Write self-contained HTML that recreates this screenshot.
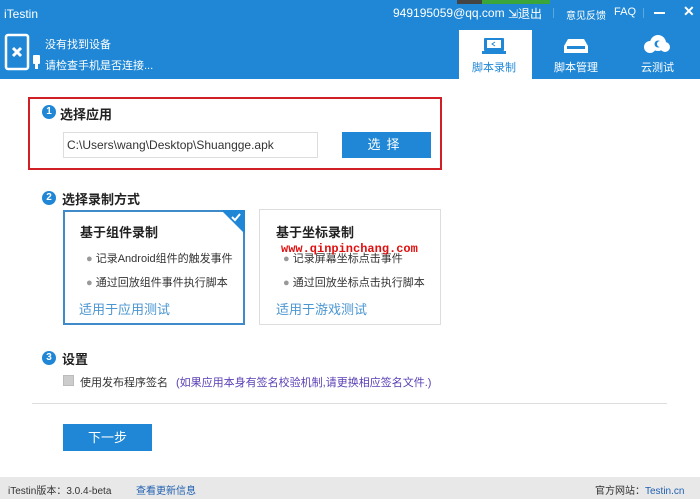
<!DOCTYPE html><html><head><meta charset="utf-8"><style>
*{margin:0;padding:0;box-sizing:border-box}
body{width:700px;height:499px;position:relative;background:#fff;font-family:"Liberation Sans","Noto Sans CJK SC",sans-serif;font-size:12px;color:#333;overflow:hidden}
.a{position:absolute;white-space:nowrap}
.hdr{left:0;top:0;width:700px;height:79px;background:#1f87d5}
.w{color:#fff}
.num{width:14px;height:14px;border-radius:50%;background:#1f87d5;color:#fff;font-size:10px;text-align:center;line-height:14px;font-weight:bold}
.h{font-size:13px;font-weight:bold;color:#222}
.btn{background:#1f87d5;color:#fff;text-align:center}
.card{border:1px solid #ddd;background:#fff}
.dot{color:#999}
.blue{color:#4a96d2;font-size:13px}
</style></head><body>
<div class="a hdr"></div>
<div class="a" style="left:462px;top:0;width:88px;height:4px;background:#3aa53a"></div>
<div class="a" style="left:457px;top:0;width:25px;height:4px;background:#444"></div>
<div class="a w" style="left:4px;top:7px;font-size:12px">iTestin</div>
<svg class="a" style="left:4px;top:33px" width="38" height="40"><rect x="2" y="2" width="22" height="34" rx="2" fill="none" stroke="#fff" stroke-width="2.5"/><path d="M9 15l8 8M17 15l-8 8" stroke="#fff" stroke-width="3"/><rect x="29" y="22" width="7" height="9" rx="1" fill="#fff"/><rect x="31" y="31" width="3" height="5" fill="#fff"/></svg>
<div class="a w" style="left:45px;top:36px;font-size:11px">没有找到设备</div>
<div class="a w" style="left:45px;top:57px;font-size:11px">请检查手机是否连接...</div>
<div class="a w" style="left:393px;top:6px;font-size:12px">949195059@qq.com</div>
<div class="a w" style="left:508px;top:5px;font-size:12px">⇲退出</div>
<div class="a" style="left:553px;top:8px;width:1px;height:10px;background:#5aa8e0"></div>
<div class="a w" style="left:566px;top:7px;font-size:10px">意见反馈</div>
<div class="a w" style="left:614px;top:6px;font-size:11px">FAQ</div>
<div class="a" style="left:643px;top:8px;width:1px;height:10px;background:#5aa8e0"></div>
<div class="a" style="left:654px;top:12px;width:11px;height:2px;background:#fff"></div>
<div class="a w" style="left:683px;top:3px;font-size:14px;font-weight:bold">✕</div>
<div class="a" style="left:459px;top:30px;width:73px;height:49px;background:#fff"></div>
<svg class="a" style="left:482px;top:37px" width="24" height="18"><rect x="2" y="1" width="20" height="13" rx="1" fill="#1f87d5"/><rect x="5" y="3" width="14" height="8" fill="#fff"/><rect x="0" y="14" width="24" height="3" fill="#1f87d5"/><path d="M13 5l-3 2 3 2" stroke="#1f87d5" fill="none"/></svg>
<div class="a" style="left:472px;top:59px;font-size:11px;color:#1f87d5">脚本录制</div>
<svg class="a" style="left:563px;top:37px" width="26" height="18"><path d="M5 2h16l4 7v7H1V9z" fill="#fff"/><rect x="4" y="9" width="18" height="3" fill="#1f87d5"/></svg>
<div class="a w" style="left:554px;top:59px;font-size:11px">脚本管理</div>
<svg class="a" style="left:643px;top:34px" width="28" height="20"><circle cx="15" cy="9" r="8" fill="#fff"/><circle cx="7" cy="13" r="6" fill="#fff"/><circle cx="22" cy="13" r="5" fill="#fff"/><circle cx="15" cy="10" r="3.5" fill="#1f87d5"/><circle cx="17" cy="10" r="3" fill="#fff"/></svg>
<div class="a w" style="left:641px;top:59px;font-size:11px">云测试</div>

<div class="a" style="left:28px;top:97px;width:414px;height:73px;border:2px solid #d01f25"></div>
<div class="a num" style="left:42px;top:105px">1</div>
<div class="a h" style="left:60px;top:104px">选择应用</div>
<div class="a" style="left:63px;top:132px;width:255px;height:26px;border:1px solid #ddd;padding:5px 0 0 3px;font-size:12px">C:\Users\wang\Desktop\Shuangge.apk</div>
<div class="a btn" style="left:342px;top:132px;width:89px;height:26px;line-height:26px;font-size:13px;letter-spacing:6px">选择</div>
<div class="a num" style="left:42px;top:191px">2</div>
<div class="a h" style="left:62px;top:189px">选择录制方式</div>
<div class="a card" style="left:63px;top:210px;width:182px;height:115px;border:2px solid #3f8ac8"></div>
<svg class="a" style="left:221px;top:210px" width="24" height="24"><path d="M0 0h24v24z" fill="#1f87d5"/><path d="M11 7l3 3 5-6" stroke="#fff" stroke-width="2" fill="none"/></svg>
<div class="a h" style="left:80px;top:222px">基于组件录制</div>
<div class="a" style="left:86px;top:250px;font-size:11px"><span class="dot">●</span> 记录Android组件的触发事件</div>
<div class="a" style="left:86px;top:274px;font-size:11px"><span class="dot">●</span> 通过回放组件事件执行脚本</div>
<div class="a blue" style="left:79px;top:299px">适用于应用测试</div>
<div class="a card" style="left:259px;top:209px;width:182px;height:116px"></div>
<div class="a h" style="left:276px;top:222px">基于坐标录制</div>
<div class="a" style="left:283px;top:250px;font-size:11px"><span class="dot">●</span> 记录屏幕坐标点击事件</div>
<div class="a" style="left:281px;top:242px;font-size:12px;color:#e01010;font-family:'Liberation Mono',monospace;font-weight:bold">www.qinpinchang.com</div>
<div class="a" style="left:283px;top:274px;font-size:11px"><span class="dot">●</span> 通过回放坐标点击执行脚本</div>
<div class="a blue" style="left:276px;top:299px">适用于游戏测试</div>
<div class="a num" style="left:42px;top:351px">3</div>
<div class="a h" style="left:62px;top:349px">设置</div>
<div class="a" style="left:63px;top:375px;width:11px;height:11px;background:#ccc;border:1px solid #bbb"></div>
<div class="a" style="left:80px;top:374px;font-size:11px">使用发布程序签名</div>
<div class="a" style="left:176px;top:374px;font-size:11px;color:#5a3fb5">(如果应用本身有签名校验机制,请更换相应签名文件.)</div>
<div class="a" style="left:32px;top:403px;width:635px;height:1px;background:#ddd"></div>
<div class="a btn" style="left:63px;top:424px;width:89px;height:27px;line-height:27px;font-size:13px">下一步</div>
<div class="a" style="left:0;top:477px;width:700px;height:22px;background:#e8e8e8"></div>
<div class="a" style="left:8px;top:482px;font-size:10px">iTestin版本：3.0.4-beta</div>
<div class="a" style="left:136px;top:482px;font-size:10px;color:#1f5fb0">查看更新信息</div>
<div class="a" style="left:595px;top:482px;font-size:10px">官方网站：<span style="color:#1f5fb0">Testin.cn</span></div>
</body></html>
